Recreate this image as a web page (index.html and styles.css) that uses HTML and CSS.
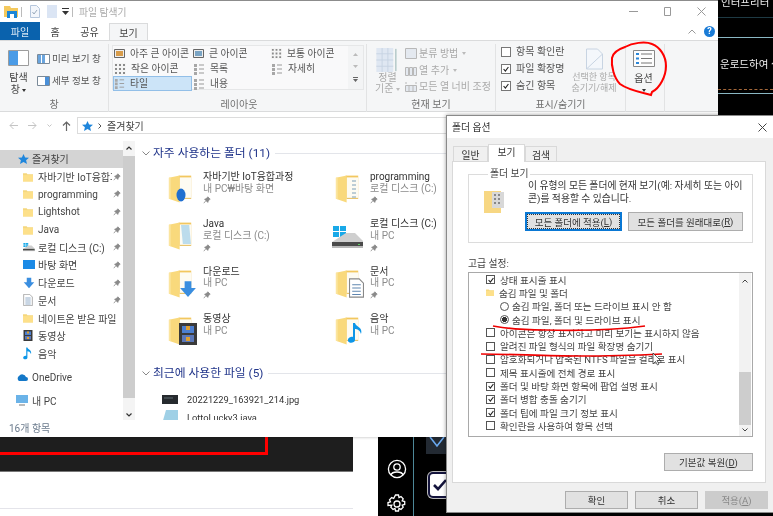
FILE: index.html
```html
<!DOCTYPE html>
<html lang="ko">
<head>
<meta charset="utf-8">
<title>폴더 옵션</title>
<link rel="stylesheet" href="styles.css">
</head>
<body>
<svg class="defs" width="0" height="0">
  <defs>
    <symbol id="folder" viewBox="0 0 16 14"><path d="M0 1h6l1 1.500h9V14H0z" fill="#f5d77e"/><path d="M0 4h16v10H0z" fill="#fde08a"/></symbol>
    <symbol id="bigfolder" viewBox="0 0 28 32"><path d="M12 1h14v25H12z" fill="#f2c75f"/><path d="M13 3h13v23H13z" fill="#fdfbf2"/><path d="M1 3.500 13 1v30L1 27z" fill="#f9d97c"/><path d="M1 3.500l2-.4V27.600L1 27z" fill="#fbe59f"/><path d="M13 26h13v1H13z" fill="#e3b84f"/></symbol>
    <symbol id="pin" viewBox="0 0 10 10"><path d="M6 1l3 3-1 .5-1.500 2L6 8 2 4l1.500-.5 2-1.500zM3.500 6 1 9" fill="#8a8a8a" stroke="#8a8a8a"/></symbol>
    <symbol id="check" viewBox="0 0 10 10"><path d="M2 5l2.200 2.500L8 2.500" fill="none" stroke="#222" stroke-width="1.400"/></symbol>
    <symbol id="down" viewBox="0 0 16 16"><path d="M5 1h6v6h4l-7 8-7-8h4z" fill="#3a8ee0"/></symbol>
    <symbol id="disk" viewBox="0 0 32 24"><path d="M1 1h6v5H1zM8 1h6v5H8zM1 7h6v5H1zM8 7h6v5H8z" fill="#19a9e8"/><path d="M14 8h9l8 8v3H0v-2z" fill="#cfcfcf"/><path d="M0 17h31v5H0z" fill="#4a4a4a"/><path d="M0 21h31v2H0z" fill="#b8b8b8"/><path d="M26 19h2v1h-2z" fill="#5fd05f"/></symbol>
    <symbol id="note" viewBox="0 0 16 22"><path d="M5 1h2c1 4 8 4 6 11-1-4-4-5-6-5v11c0 3-6 4-7 1s3-5 5-4z" fill="#0d96e8"/></symbol>
    <symbol id="film" viewBox="0 0 18 22"><path d="M0 0h18v22H0z" fill="#3a3a3a"/><path d="M3 3h12v7H3z" fill="#4c7fd0"/><path d="M3 12h12v7H3z" fill="#5c78b8"/><path d="M7 3h4v4H7zM7 14h4v4H7z" fill="#e0a030"/></symbol>
    <symbol id="doc" viewBox="0 0 14 18"><path d="M.5.500h9l4 4v13H.500z" fill="#fff" stroke="#888"/><path d="M3 6h8M3 9h8M3 12h8M3 15h8" stroke="#5f86b0"/></symbol>
    <symbol id="grid" viewBox="0 0 12 12"><path d="M0 0h12v12H0z" fill="#f5f5f5"/><path d="M1 1h2v2H1zM5 1h2v2H5zM9 1h2v2H9zM1 5h2v2H1zM5 5h2v2H5zM9 5h2v2H9zM1 9h2v2H1zM5 9h2v2H5zM9 9h2v2H9z" fill="#8b8b8b"/></symbol>
    <symbol id="list" viewBox="0 0 12 12"><path d="M1 1h3v3H1zM1 5h3v3H1zM1 9h3v3H1z" fill="#a7a7a7"/><path d="M6 2h5M6 6h5M6 10h5" stroke="#999"/></symbol>
  </defs>
</svg>
<div class="desktop">

  <div class="editor"><div class="red-frame"></div></div>
  <div class="page-rule"></div>

  <div class="app">
    <div class="app-line app-line-a"></div>
    <div class="app-line app-line-b"></div>
    <div class="app-line app-line-c"></div>
    <div class="app-dash"></div>
    <span class="app-text app-text-a">인터프리터</span>
    <span class="app-text app-text-b">운로드하여 실</span>
    <div class="side-rule"></div>
    <div class="tile"><svg width="16" height="12" viewBox="0 0 16 12"><path d="M1 1l7 9 7-9" fill="none" stroke="#6aa8ee" stroke-width="1.600"/></svg></div>
    <svg class="ico-user" width="20" height="20" viewBox="0 0 20 20"><circle cx="10" cy="10" r="8.600" fill="none" stroke="#fff" stroke-width="1.300"/><circle cx="10" cy="8" r="3.200" fill="none" stroke="#fff" stroke-width="1.300"/><path d="M4 16c1-4 11-4 12 0" fill="none" stroke="#fff" stroke-width="1.300"/></svg>
    <svg class="ico-gear" width="20" height="20" viewBox="0 0 20 20"><circle cx="10" cy="10" r="3" fill="none" stroke="#fff" stroke-width="1.300"/><path d="M8.500 1h3l.5 2.500 2-.9 2.200 2.200-1 2 2.500.7v3l-2.500.7 1 2-2.200 2.200-2-1-.5 2.600h-3l-.5-2.600-2 1-2.200-2.200 1-2L1 11.500v-3l2.500-.7-1-2 2.200-2.200 2 .9z" fill="none" stroke="#fff" stroke-width="1.300"/></svg>
    <div class="check-tile"><svg width="14" height="12" viewBox="0 0 14 12"><path d="M1 6l4 4 8-9" fill="none" stroke="#14143c" stroke-width="2.600"/></svg></div>
  </div>

  <section class="explorer">
    <header class="titlebar">
      <svg class="qa-folder" width="14" height="13" viewBox="0 0 14 13"><path d="M0 1h6l1 2h7v9H0z" fill="#f4c95d"/><path d="M3 6h10v7H3z" fill="#1b86d8"/><path d="M6 9h4v4H6z" fill="#fff"/></svg>
      <span class="qa-sep"></span>
      <svg class="qa-doc" width="10" height="13" viewBox="0 0 10 13"><path d="M.5.500h6l3 3v9H.500z" fill="#f3f6fb" stroke="#b5c6dc"/><path d="M2.500 7l1.500 2 3-4" fill="none" stroke="#9ab"/></svg>
      <svg class="qa-doc" width="10" height="13" viewBox="0 0 10 13"><path d="M0 0h10v13H0z" fill="#dbe5f4"/></svg>
      <svg class="qa-drop" width="7" height="7" viewBox="0 0 7 7"><path d="M0 0h7v1H0zM0 3h7L3.500 7z" fill="#333"/></svg>
      <span class="qa-sep"></span>
      <span class="title-text">파일 탐색기</span>
      <div class="winbtns">
        <svg width="9" height="9" viewBox="0 0 9 9"><path d="M0 4.500h9" stroke="#999"/></svg>
        <svg width="9" height="9" viewBox="0 0 9 9"><path d="M1.500.5h6v8h-6z" fill="none" stroke="#999"/></svg>
        <svg width="9" height="9" viewBox="0 0 9 9"><path d="M.5.500l8 8M8.500.5l-8 8" stroke="#999"/></svg>
      </div>
    </header>

    <nav class="tabs">
      <span class="tab tab-file">파일</span>
      <span class="tab tab-home">홈</span>
      <span class="tab tab-share">공유</span>
      <span class="tab tab-view">보기</span>
      <div class="tabs-end">
        <svg width="8" height="5" viewBox="0 0 8 5"><path d="M.5 4.500 4 1l3.500 3.500" fill="none" stroke="#999"/></svg>
        <span class="help">?</span>
      </div>
    </nav>

    <div class="ribbon">
      <div class="group group-pane">
        <div class="group-body pane-body">
          <div class="nav-pane">
            <svg width="21" height="16" viewBox="0 0 21 16"><path d="M.5.500h20v15H.500z" fill="#fff" stroke="#9c9c9c"/><path d="M1 1h9v14H1z" fill="#4a9be6"/></svg>
            <span class="nav-pane-label">탐색<br>창 <i class="caret"></i></span>
          </div>
          <div class="pane-list">
            <span class="pane-item"><svg width="13" height="10" viewBox="0 0 13 10"><path d="M.5.500h12v9H.500z" fill="#fff" stroke="#7a8a99"/><path d="M1 1h3v8H1zM5 1h3v8H5z" fill="#6aa5de"/></svg>미리 보기 창</span>
            <span class="pane-item"><svg width="13" height="10" viewBox="0 0 13 10"><path d="M.5.500h12v9H.500z" fill="#fff" stroke="#7a8a99"/><path d="M8 1h4v8H8z" fill="#4a90d9"/></svg>세부 정보 창</span>
          </div>
        </div>
        <div class="group-label">창</div>
      </div>

      <div class="group group-layout">
        <div class="group-body">
          <div class="gallery">
            <div class="gallery-grid">
              <span class="g-item"><svg width="11" height="9" viewBox="0 0 11 9"><path d="M.5.500h10v8H.500z" fill="#eee" stroke="#666"/><path d="M2 2h7v5H2z" fill="#d89c4a"/></svg>아주 큰 아이콘</span>
              <span class="g-item"><svg width="11" height="9" viewBox="0 0 11 9"><path d="M.5.500h10v8H.500z" fill="#eee" stroke="#666"/><path d="M2 2h7v5H2z" fill="#7aa4c4"/></svg>큰 아이콘</span>
              <span class="g-item"><svg width="11" height="11"><use href="#grid"/></svg>보통 아이콘</span>
              <span class="g-item"><svg width="12" height="12"><use href="#grid"/></svg>작은 아이콘</span>
              <span class="g-item"><svg width="12" height="12"><use href="#list"/></svg>목록</span>
              <span class="g-item"><svg width="12" height="12"><use href="#list"/></svg>자세히</span>
              <span class="g-item g-selected"><svg width="11" height="11"><use href="#list"/></svg>타일</span>
              <span class="g-item"><svg width="12" height="12"><use href="#list"/></svg>내용</span>
            </div>
            <div class="gallery-scroll">
              <svg width="5" height="3" viewBox="0 0 5 3"><path d="M0 3l2.500-3L5 3z" fill="#bbb"/></svg>
              <svg width="5" height="3" viewBox="0 0 5 3"><path d="M0 0l2.500 3L5 0z" fill="#bbb"/></svg>
              <svg width="5" height="5" viewBox="0 0 5 5"><path d="M0 0h5v1H0zM0 2h5L2.500 5z" fill="#666"/></svg>
            </div>
          </div>
        </div>
        <div class="group-label">레이아웃</div>
      </div>

      <div class="group group-view">
        <div class="group-body view-body">
          <div class="sort">
            <svg width="24" height="24" viewBox="0 0 24 27"><path d="M0 0h19v27H0z" fill="#dfe7f2"/><path d="M0 6.500h19M0 13.500h19M0 20.500h19M6.500 0v27M13 0v27" stroke="#c6d2e2"/><path d="M22 1v25" stroke="#8aa"/></svg>
            <span class="sort-label">정렬<br>기준 <i class="caret caret-light"></i></span>
          </div>
          <div class="view-list">
            <span class="view-item"><svg width="12" height="11" viewBox="0 0 12 11"><path d="M.5.500h11v10H.500z" fill="#e4e9f0" stroke="#b8b8b8"/></svg>분류 방법 <i class="caret caret-light"></i></span>
            <span class="view-item"><svg width="12" height="11" viewBox="0 0 12 11"><path d="M.5 2.500h3v8h-3zM4.500 2.500h3v8h-3zM8.500 2.500h3v8h-3z" fill="#e4e9f0" stroke="#b8b8b8"/></svg>열 추가 <i class="caret caret-light"></i></span>
            <span class="view-item"><svg width="12" height="11" viewBox="0 0 12 11"><path d="M.5 4.500h11v6H.500zM4 4.500v6M8 4.500v6M1 1v2M11 1v2" fill="#e4e9f0" stroke="#b8b8b8"/></svg>모든 열 너비 조정</span>
          </div>
        </div>
        <div class="group-label">현재 보기</div>
      </div>

      <div class="group group-show">
        <div class="group-body show-body">
          <div class="show-list">
            <span class="show-item"><span class="box"></span>항목 확인란</span>
            <span class="show-item"><span class="box"><svg width="8" height="8"><use href="#check"/></svg></span>파일 확장명</span>
            <span class="show-item"><span class="box"><svg width="8" height="8"><use href="#check"/></svg></span>숨긴 항목</span>
          </div>
          <div class="hide-sel">
            <svg width="17" height="22" viewBox="0 0 17 21"><path d="M.5.500h11l5 5v15H.500z" fill="#f4f7fb" stroke="#c8d4e2"/><path d="M1 20 16 6" stroke="#c8d4e2"/></svg>
            <span>선택한 항목<br>숨기기/해제</span>
          </div>
        </div>
        <div class="group-label">표시/숨기기</div>
      </div>

      <div class="group group-opt">
        <div class="group-body opt-body">
          <svg width="22" height="17" viewBox="0 0 22 17"><path d="M.5.500h21v16H.500z" fill="#fdfdfd" stroke="#888"/><path d="M3 4h3M3 8.500h3M3 13h3" stroke="#2a86d8" stroke-width="2"/><path d="M8 4h11M8 8.500h11M8 13h11" stroke="#777"/></svg>
          <span>옵션</span>
          <i class="caret"></i>
        </div>
      </div>
    </div>

    <div class="addressbar">
      <div class="nav-arrows">
        <svg width="9" height="9" viewBox="0 0 9 9"><path d="M9 4.500H1M4.500 1 1 4.500 4.500 8" fill="none" stroke="#c4c4c4"/></svg>
        <svg width="9" height="9" viewBox="0 0 9 9"><path d="M0 4.500h8M4.500 1 8 4.500 4.500 8" fill="none" stroke="#c4c4c4"/></svg>
        <svg width="5" height="3" viewBox="0 0 5 3"><path d="M.5.500l2 2 2-2" fill="none" stroke="#c4c4c4"/></svg>
        <svg width="9" height="10" viewBox="0 0 9 10"><path d="M4.500 10V1M1 4.500 4.500 1 8 4.500" fill="none" stroke="#666" stroke-width="1.200"/></svg>
      </div>
      <div class="address">
        <svg width="11" height="10" viewBox="0 0 11 10"><path d="M5.500 0l1.600 3.400 3.900.4-2.900 2.500.9 3.700-3.500-2-3.500 2 .9-3.700L0 3.800l3.900-.4z" fill="#1f86dc"/></svg>
        <svg width="4" height="6" viewBox="0 0 4 6"><path d="M.5.500 3 3 .5 5.500" fill="none" stroke="#555"/></svg>
        <span>즐겨찾기</span>
      </div>
    </div>

    <div class="main">
      <aside class="sidebar">
        <div class="tree">
          <div class="tree-row tree-root"><svg class="tree-ico" width="11" height="10" viewBox="0 0 11 10"><path d="M5.500 0l1.600 3.400 3.900.4-2.900 2.500.9 3.700-3.500-2-3.500 2 .9-3.700L0 3.800l3.900-.4z" fill="#1f86dc"/></svg><span>즐겨찾기</span></div>
          <div class="tree-row"><svg class="tree-ico" width="10" height="12"><use href="#folder"/></svg><span class="tree-name">자바기반 IoT융합과정</span><svg class="tree-pin" width="8" height="8"><use href="#pin"/></svg></div>
          <div class="tree-row"><svg class="tree-ico" width="10" height="12"><use href="#folder"/></svg><span class="tree-name">programming</span><svg class="tree-pin" width="8" height="8"><use href="#pin"/></svg></div>
          <div class="tree-row"><svg class="tree-ico" width="10" height="12"><use href="#folder"/></svg><span class="tree-name">Lightshot</span><svg class="tree-pin" width="8" height="8"><use href="#pin"/></svg></div>
          <div class="tree-row"><svg class="tree-ico" width="10" height="12"><use href="#folder"/></svg><span class="tree-name">Java</span><svg class="tree-pin" width="8" height="8"><use href="#pin"/></svg></div>
          <div class="tree-row"><svg class="tree-ico" width="12" height="10"><use href="#disk"/></svg><span class="tree-name">로컬 디스크 (C:)</span><svg class="tree-pin" width="8" height="8"><use href="#pin"/></svg></div>
          <div class="tree-row"><svg class="tree-ico" width="12" height="10" viewBox="0 0 12 10"><path d="M0 0h12v9H0z" fill="#1b8ae6"/></svg><span class="tree-name">바탕 화면</span><svg class="tree-pin" width="8" height="8"><use href="#pin"/></svg></div>
          <div class="tree-row"><svg class="tree-ico" width="12" height="12"><use href="#down"/></svg><span class="tree-name">다운로드</span><svg class="tree-pin" width="8" height="8"><use href="#pin"/></svg></div>
          <div class="tree-row"><svg class="tree-ico" width="10" height="12"><use href="#doc"/></svg><span class="tree-name">문서</span><svg class="tree-pin" width="8" height="8"><use href="#pin"/></svg></div>
          <div class="tree-row"><svg class="tree-ico" width="10" height="12"><use href="#folder"/></svg><span class="tree-name tree-wide">네이트온 받은 파일</span></div>
          <div class="tree-row"><svg class="tree-ico" width="10" height="11"><use href="#film"/></svg><span class="tree-name">동영상</span></div>
          <div class="tree-row"><svg class="tree-ico" width="10" height="13"><use href="#note"/></svg><span class="tree-name">음악</span></div>
          <div class="tree-row tree-top tree-drive"><svg class="tree-ico" width="12" height="8" viewBox="0 0 12 8"><path d="M3 8a3 3 0 0 1 0-5 4 4 0 0 1 7 1 2 2 0 0 1 0 4z" fill="#1478c8"/></svg><span>OneDrive</span></div>
          <div class="tree-row tree-top tree-pc"><svg class="tree-ico" width="12" height="11" viewBox="0 0 12 11"><path d="M0 0h12v8H0z" fill="#6bb3e8"/><path d="M3 9h6v2H3z" fill="#bbb"/></svg><span>내 PC</span></div>
        </div>
        <div class="side-scroll">
          <svg width="6" height="4" viewBox="0 0 6 4"><path d="M.5 3.500 3 1l2.500 2.500" fill="none" stroke="#333" stroke-width="1.200"/></svg>
          <div class="side-thumb"></div>
          <svg width="6" height="4" viewBox="0 0 6 4"><path d="M.5.500 3 3 5.500.5" fill="none" stroke="#333" stroke-width="1.200"/></svg>
        </div>
      </aside>

      <div class="content">
        <h2 class="sec-head"><svg width="8" height="5" viewBox="0 0 8 5"><path d="M.5.500 4 4 7.500.5" fill="none" stroke="#888"/></svg><span>자주 사용하는 폴더 (11)</span><i class="sec-rule"></i></h2>
        <div class="folders">
          <div class="folder">
            <span class="folder-ico"><svg width="25" height="30"><use href="#bigfolder"/></svg><svg class="badge badge-cd" width="10" height="14" viewBox="0 0 10 14"><ellipse cx="5" cy="7" rx="4.500" ry="6.500" fill="#1f6fd0"/></svg></span>
            <div class="folder-text"><b>자바기반 IoT융합과정</b><span>내 PC₩바탕 화면</span><svg width="8" height="8"><use href="#pin"/></svg></div>
          </div>
          <div class="folder">
            <span class="folder-ico"><svg width="25" height="30"><use href="#bigfolder"/></svg><svg class="badge badge-lines" width="6" height="18" viewBox="0 0 6 18"><path d="M1 1h4M1 5h4M1 9h4M1 13h4M1 17h4" stroke="#7d9fb8"/></svg></span>
            <div class="folder-text"><b>programming</b><span>로컬 디스크 (C:)</span><svg width="8" height="8"><use href="#pin"/></svg></div>
          </div>
          <div class="folder">
            <span class="folder-ico"><svg width="25" height="30"><use href="#bigfolder"/></svg><svg class="badge badge-page" width="10" height="19" viewBox="0 0 11 21"><path d="M0 0h9l2 21H2z" fill="#bcdcec"/></svg></span>
            <div class="folder-text"><b>Java</b><span>로컬 디스크 (C:)</span><svg width="8" height="8"><use href="#pin"/></svg></div>
          </div>
          <div class="folder">
            <span class="folder-ico folder-disk"><svg width="32" height="24"><use href="#disk"/></svg></span>
            <div class="folder-text"><b>로컬 디스크 (C:)</b><span>내 PC</span><svg width="8" height="8"><use href="#pin"/></svg></div>
          </div>
          <div class="folder">
            <span class="folder-ico"><svg width="25" height="30"><use href="#bigfolder"/></svg><svg class="badge badge-corner" width="18" height="18"><use href="#down"/></svg></span>
            <div class="folder-text"><b>다운로드</b><span>내 PC</span><svg width="8" height="8"><use href="#pin"/></svg></div>
          </div>
          <div class="folder">
            <span class="folder-ico"><svg width="25" height="30"><use href="#bigfolder"/></svg><svg class="badge badge-corner" width="15" height="20"><use href="#doc"/></svg></span>
            <div class="folder-text"><b>문서</b><span>내 PC</span><svg width="8" height="8"><use href="#pin"/></svg></div>
          </div>
          <div class="folder">
            <span class="folder-ico"><svg width="25" height="30"><use href="#bigfolder"/></svg><svg class="badge badge-corner" width="18" height="22"><use href="#film"/></svg></span>
            <div class="folder-text"><b>동영상</b><span>내 PC</span></div>
          </div>
          <div class="folder">
            <span class="folder-ico"><svg width="25" height="30"><use href="#bigfolder"/></svg><svg class="badge badge-corner" width="16" height="24"><use href="#note"/></svg></span>
            <div class="folder-text"><b>음악</b><span>내 PC</span></div>
          </div>
        </div>
        <h2 class="sec-head sec-recent"><svg width="8" height="5" viewBox="0 0 8 5"><path d="M.5.500 4 4 7.500.5" fill="none" stroke="#888"/></svg><span>최근에 사용한 파일 (5)</span><i class="sec-rule"></i></h2>
        <div class="recent">
          <div class="recent-row"><svg width="16" height="9" viewBox="0 0 16 9"><path d="M0 0h16v9H0z" fill="#262a2e"/><path d="M2 3h9" stroke="#5d6a70"/></svg><span>20221229_163921_214.jpg</span></div>
          <div class="recent-row"><svg width="16" height="14" viewBox="0 0 16 14"><path d="M4 0h12v14H0z" fill="#9fd0e6"/></svg><span>LottoLucky3.java</span></div>
        </div>
      </div>
    </div>

    <footer class="statusbar"><span>16개 항목</span></footer>
  </section>

  <section class="dialog">
    <header class="dlg-title">
      <span>폴더 옵션</span>
      <svg width="9" height="9" viewBox="0 0 9 9"><path d="M.5.500l8 8M8.500.5l-8 8" stroke="#444"/></svg>
    </header>
    <div class="dlg-tabs">
      <span class="dlg-tab">일반</span>
      <span class="dlg-tab dlg-tab-on">보기</span>
      <span class="dlg-tab dlg-tab-last">검색</span>
    </div>
    <div class="dlg-panel">
      <fieldset class="fview">
        <legend>폴더 보기</legend>
        <svg class="fview-ico" width="20" height="22" viewBox="0 0 20 22"><path d="M0 0h17v22H0z" fill="#f7d783"/><path d="M8 1h12v16H8z" fill="#d8d8d8"/><path d="M10 3h2v2h-2zM14 3h2v2h-2zM10 7h2v2h-2zM14 7h2v2h-2zM10 11h2v2h-2zM14 11h2v2h-2z" fill="#888"/></svg>
        <div class="fview-main">
          <p>이 유형의 모든 폴더에 현재 보기(예: 자세히 또는 아이<br>콘)를 적용할 수 있습니다.</p>
          <div class="fview-btns">
            <button class="btn btn-focus" type="button"><span>모든 폴더에 적용(<u>L</u>)</span></button>
            <button class="btn btn-reset" type="button">모든 폴더를 원래대로(<u>R</u>)</button>
          </div>
        </div>
      </fieldset>
      <div class="adv-label">고급 설정:</div>
      <div class="adv-list">
        <ul class="adv-rows">
          <li><span class="cb"><svg width="8" height="8"><use href="#check"/></svg></span>상태 표시줄 표시</li>
          <li><svg class="adv-folder" width="8" height="9"><use href="#folder"/></svg>숨김 파일 및 폴더</li>
          <li class="sub"><span class="radio"></span>숨김 파일, 폴더 또는 드라이브 표시 안 함</li>
          <li class="sub"><span class="radio radio-on"></span>숨김 파일, 폴더 및 드라이브 표시</li>
          <li><span class="cb"></span>아이콘은 항상 표시하고 미리 보기는 표시하지 않음</li>
          <li><span class="cb"></span>알려진 파일 형식의 파일 확장명 숨기기</li>
          <li><span class="cb"></span>암호화되거나 압축된 NTFS 파일을 컬러로 표시</li>
          <li><span class="cb"></span>제목 표시줄에 전체 경로 표시</li>
          <li><span class="cb"><svg width="8" height="8"><use href="#check"/></svg></span>폴더 및 바탕 화면 항목에 팝업 설명 표시</li>
          <li><span class="cb"><svg width="8" height="8"><use href="#check"/></svg></span>폴더 병합 충돌 숨기기</li>
          <li><span class="cb"><svg width="8" height="8"><use href="#check"/></svg></span>폴더 팁에 파일 크기 정보 표시</li>
          <li><span class="cb"></span>확인란을 사용하여 항목 선택</li>
        </ul>
        <div class="adv-scroll">
          <svg width="6" height="4" viewBox="0 0 6 4"><path d="M.5 3.500 3 1l2.500 2.500" fill="none" stroke="#444"/></svg>
          <div class="adv-thumb"></div>
          <svg width="6" height="4" viewBox="0 0 6 4"><path d="M.5.500 3 3 5.500.5" fill="none" stroke="#444"/></svg>
        </div>
      </div>
      <div class="restore-row"><button class="btn btn-restore" type="button">기본값 복원(<u>D</u>)</button></div>
    </div>
    <footer class="dlg-actions">
      <button class="btn btn-act" type="button">확인</button>
      <button class="btn btn-act" type="button">취소</button>
      <button class="btn btn-act btn-off" type="button">적용(<u>A</u>)</button>
    </footer>
  </section>

  <svg class="scribble" width="773" height="516" viewBox="0 0 773 516">
    <path d="M625 47C632 43 645 41 652 44 660 47 666 56 666 66 666 76 660 88 652 92L651 95C640 92 628 90 620 84 614 78 611 66 612 58 613 52 619 49 625 47Z" fill="none" stroke="#f00" stroke-width="2"/>
    <path d="M493 326C510 329 530 330 545 330 580 331 615 330 645 326" fill="none" stroke="#e00" stroke-width="1.700"/>
    <path d="M481 354C510 354 545 356 578 356 610 356 640 355 662 354" fill="none" stroke="#e00" stroke-width="1.700"/>
    <path d="M653 353v11l2.500-2.500 2 3.500 1.500-1-2-3.500h3.500z" fill="#fff" stroke="#222" stroke-width=".7"/>
  </svg>
</div>
</body>
</html>
```
FILE: styles.css
```css
* { box-sizing: border-box; }
html, body { margin: 0; padding: 0; background: #fff; }
body { font-family: Roboto, "Noto Sans CJK KR", "Noto Sans", sans-serif; font-size: 10px; color: #333; overflow: hidden; }
.defs { position: absolute; }
svg { display: block; flex: none; }
i { font-style: normal; }

.desktop { position: relative; width: 773px; height: 516px; overflow: hidden; background: #fff; filter: blur(.35px); }

/* background windows */
.editor { position: absolute; left: 0; top: 437px; width: 353px; height: 35px; background: #1e1e1e; border-bottom: 1px solid #777; overflow: hidden; }
.red-frame { position: absolute; left: -4px; top: -4px; width: 272px; height: 22px; border: 3px solid #f00; }
.page-rule { position: absolute; left: 0; top: 508px; width: 353px; height: 1px; background: #e4e4ea; }
.app { position: absolute; left: 378px; top: 0; width: 395px; height: 516px; background: #000; }
.app-line { position: absolute; left: 340px; right: 0; height: 1px; background: #8ab8c4; }
.app-line-a { top: 17px; background: #1e3a44; }
.app-line-b { top: 37px; }
.app-line-c { top: 93px; }
.app-dash { position: absolute; left: 340px; right: 0; top: 89px; border-top: 1px dashed #a5683a; }
.app-text { position: absolute; left: 343px; color: #eee; font-size: 10.500px; line-height: 14px; white-space: nowrap; }
.app-text-a { top: -4px; }
.app-text-b { left: 342px; top: 58px; }
.side-rule { position: absolute; left: 35px; top: 430px; bottom: 0; width: 1px; background: #4d8798; }
.tile { position: absolute; left: 48px; top: 430px; width: 30px; height: 24px; background: #232a33; padding: 6px 0 0 3px; }
.ico-user { position: absolute; left: 9px; top: 459px; }
.ico-gear { position: absolute; left: 9px; top: 494px; }
.check-tile { position: absolute; left: 50px; top: 472px; width: 32px; height: 26px; background: #fff; border: 2px solid #14143c; border-radius: 5px; padding: 5px 0 0 3px; box-shadow: 0 0 0 1px #bbb; }

/* explorer */
.explorer { position: absolute; left: 0; top: 0; width: 718px; height: 437px; background: #fff; border-top: 1px solid #8c8c8c; display: flex; flex-direction: column; box-shadow: 0 0 3px rgba(0,0,0,.3); }
.titlebar { height: 21px; flex: none; display: flex; align-items: center; padding: 0 0 0 4px; }
.qa-sep { width: 1px; height: 10px; background: #bbb; margin: 0 4px 0 3px; }
.qa-doc { margin: 0 3px 0 4px; }
.qa-drop { margin: 0 0 0 2px; }
.title-text { color: #aaa; font-size: 9.800px; margin-left: 2px; }
.winbtns { margin-left: auto; display: flex; gap: 25px; padding-right: 12px; }

.tabs { height: 18px; flex: none; display: flex; align-items: stretch; background: #fff; position: relative; }
.tab { display: flex; align-items: center; justify-content: center; font-size: 10px; color: #444; }
.tab-file { width: 40px; background: #0a62ad; color: #dbe9f5; }
.tab-home { width: 30px; }
.tab-share { width: 39px; }
.tab-view { width: 39px; background: #f5f6f7; border: 1px solid #dadbdc; border-bottom: 0; margin-top: 1px; }
.tabs-end { margin-left: auto; display: flex; align-items: center; gap: 8px; padding: 0 3px 0 0; }
.help { width: 11px; height: 11px; border-radius: 50%; background: #1a7bd6; color: #fff; font-size: 9px; line-height: 11px; text-align: center; font-weight: 700; }

.ribbon { height: 72px; flex: none; display: flex; background: #f5f6f7; border-top: 1px solid #dadbdc; border-bottom: 1px solid #dadbdc; padding-top: 3px; }
.group { display: flex; flex-direction: column; border-right: 1px solid #e2e3e4; height: 68px; }
.group-body { flex: 1; min-height: 0; display: flex; }
.group-label { height: 15px; line-height: 15px; text-align: center; color: #6f6f6f; font-size: 10px; flex: none; }
.group-pane { width: 109px; }
.group-layout { width: 258px; padding-left: 3px; }
.group-view { width: 129px; }
.group-show { width: 130px; }
.group-opt { width: 39px; padding-right: 3px; }
.pane-body { padding: 6px 0 0 8px; gap: 8px; }
.nav-pane { display: flex; flex-direction: column; align-items: center; gap: 6px; width: 21px; }
.nav-pane-label { text-align: center; line-height: 12px; color: #444; white-space: nowrap; }
.caret { display: inline-block; width: 0; height: 0; border: 2.500px solid transparent; border-top: 3px solid #333; border-bottom: 0; vertical-align: middle; }
.caret-light { border-top-color: #bbb; }
.pane-list { display: flex; flex-direction: column; gap: 10px; padding-top: 3px; }
.pane-item { display: flex; align-items: center; gap: 2px; color: #555; line-height: 12px; white-space: nowrap; font-size: 9.600px; }

.gallery { width: 252px; height: 45px; display: flex; background: #f9f9fa; border: 1px solid #e6e7e8; margin-top: 1px; }
.gallery-grid { flex: 1; display: grid; grid-template-columns: 79px 78px 78px; grid-auto-rows: 15px; }
.gallery-scroll { width: 15px; background: #f3f4f5; display: flex; flex-direction: column; align-items: center; justify-content: space-around; padding: 3px 0; }
.g-item { display: flex; align-items: center; gap: 5px; padding-left: 1px; color: #555; white-space: nowrap; line-height: 13px; font-size: 9.800px; }
.g-selected { background: #cce4f8; border: 1px solid #92bfe8; padding-left: 0; }

.view-body { padding: 1px 0 0 0; gap: 4px; }
.sort { display: flex; flex-direction: column; align-items: flex-start; width: 26px; margin-left: 8px; margin-top: 3px; }
.sort-label { color: #aaa; line-height: 11px; text-align: center; white-space: nowrap; }
.view-list { display: flex; flex-direction: column; gap: 3.500px; padding-top: 2px; }
.view-item { display: flex; align-items: center; gap: 2px; color: #aaa; line-height: 13px; white-space: nowrap; }
.view-item .caret { margin-left: 2px; }

.show-body { padding: 1px 0 0 5px; gap: 7px; }
.show-list { display: flex; flex-direction: column; gap: 4px; }
.show-item { display: flex; align-items: center; gap: 5px; color: #555; line-height: 13px; white-space: nowrap; }
.box { width: 10px; height: 10px; background: #fff; border: 1px solid #777; display: flex; align-items: center; justify-content: center; }
.hide-sel { display: flex; flex-direction: column; align-items: center; color: #aaa; line-height: 11px; white-space: nowrap; font-size: 9px; gap: 2px; padding-top: 3px; text-align: center; }

.opt-body { flex-direction: column; align-items: center; padding-top: 6px; color: #444; line-height: 13px; gap: 4px; }
.opt-body span { margin-top: 1px; }

.addressbar { height: 25px; flex: none; display: flex; align-items: center; padding: 5px 0 3px 9px; }
.nav-arrows { display: flex; align-items: center; gap: 10px; width: 68px; }
.address { flex: 1; height: 17px; border: 1px solid #dcdcdc; border-right: 0; display: flex; align-items: center; gap: 5px; padding-left: 4px; color: #444; }

.main { flex: 1; min-height: 0; display: flex; overflow: hidden; }
.sidebar { width: 135px; flex: none; display: flex; padding-top: 4px; height: 100%; }
.tree { width: 123px; flex: none; padding-top: 9px; }
.tree-row { height: 17.700px; display: flex; align-items: center; padding-left: 24px; white-space: nowrap; color: #444; position: relative; }
.tree-row > .tree-ico { position: absolute; left: 23px; }
.tree-root { background: #d4d4d4; padding-left: 32px; }
.tree-root > .tree-ico { left: 18px; }
.tree-name { margin-left: 14px; width: 74px; overflow: hidden; flex: none; }
.tree-wide { width: 78px; }
.tree-pin { margin-left: 1px; }
.tree-top { padding-left: 32px; }
.tree-top > .tree-ico { left: 16px; }
.tree-drive { margin-top: 6px; }
.tree-pc { margin-top: 6px; }
.side-scroll { width: 12px; height: 281px; background: #f4f4f4; display: flex; flex-direction: column; align-items: center; justify-content: space-between; padding: 5px 0; }
.side-thumb { width: 100%; height: 242px; background: #cdcdcd; margin: 0 0 10px; }

.content { flex: 1; min-width: 0; padding: 8px 0 0 7px; }
.sec-head { margin: 0; display: flex; align-items: center; gap: 3px; font-weight: 400; font-size: 11.800px; line-height: 16px; color: #21358a; white-space: nowrap; }
.sec-rule { flex: 1; height: 1px; background: #e3e5ea; margin-left: 2px; }
.folders { display: grid; grid-template-columns: 167px 167px; grid-auto-rows: 47.300px; padding: 10px 0 0 26px; }
.folder { display: flex; gap: 10px; }
.folder-ico { width: 25px; height: 32px; position: relative; flex: none; margin-top: 3px; }
.folder-disk { margin-top: 7px; margin-left: -3px; margin-right: 3px; }
.badge { position: absolute; }
.badge-cd { left: 8px; top: 14px; }
.badge-page { left: 13px; top: 4px; }
.badge-lines { left: 16px; top: 6px; }
.badge-corner { right: -4px; bottom: 3px; }
.folder-text { display: flex; flex-direction: column; color: #8b8b8b; line-height: 11.700px; white-space: nowrap; }
.folder-text b { font-weight: 400; color: #333; }
.folder-text svg { margin-top: 2px; }
.sec-recent { margin-top: 5px; }
.recent { padding: 9px 0 0 20px; }
.recent-row { display: flex; align-items: center; gap: 9px; height: 18px; color: #333; white-space: nowrap; font-size: 9.300px; }

.statusbar { height: 17px; flex: none; background: #fff; padding-left: 9px; line-height: 17px; color: #6a7a8c; position: relative; }

/* dialog */
.dialog { position: absolute; left: 446px; top: 115px; width: 330px; height: 398px; background: #f0f0f0; border: 1px solid #8a8a8a; display: flex; flex-direction: column; box-shadow: 0 0 4px rgba(0,0,0,.4); }
.dlg-title { height: 22px; flex: none; background: #fff; display: flex; align-items: center; justify-content: space-between; padding: 0 8px 0 5px; font-size: 9.800px; color: #333; }
.dlg-tabs { height: 23px; flex: none; display: flex; align-items: flex-end; padding-left: 6px; }
.dlg-tab { height: 16px; border: 1px solid #d9d9d9; border-bottom: 0; background: #f0f0f0; display: flex; align-items: center; justify-content: center; width: 35px; font-size: 9.800px; margin-bottom: -1px; }
.dlg-tab-on { background: #fff; height: 18px; width: 37px; position: relative; z-index: 1; padding-bottom: 3px; }
.dlg-tab-last { width: 32px; }
.dlg-panel { width: 314px; height: 322px; margin-left: 5px; background: #fff; border: 1px solid #d9d9d9; padding: 6px 14px 0 15px; flex: none; display: flex; flex-direction: column; }
.fview { margin: 0; padding: 0 0 0 15px; width: 285px; height: 75px; border: 1px solid #dcdcdc; display: flex; flex: none; }
.fview legend { padding: 0 2px; margin-left: 4px; line-height: 12px; color: #444; font-size: 9.800px; }
.fview-ico { margin: 11px 24px 0 0; }
.fview-main { display: block; }
.fview-main p { margin: 0; font-size: 9.800px; line-height: 12.500px; color: #333; white-space: nowrap; }
.fview-btns { display: flex; gap: 6px; margin-top: 7px; margin-left: -3px; }
.btn { font: inherit; font-size: 9.500px; color: #333; background: #e1e1e1; border: 1px solid #adadad; padding: 0; margin: 0; display: flex; align-items: center; justify-content: center; }
.btn-focus { width: 97px; height: 19px; border: 2px solid #0a78d4; }
.btn-focus span { display: flex; align-items: center; justify-content: center; width: 100%; height: 100%; outline: 1px dotted #333; outline-offset: -1px; white-space: pre; }
.btn-reset { width: 115px; height: 19px; }
.adv-label { margin-top: 15px; line-height: 12px; font-size: 9.800px; color: #444; flex: none; }
.adv-list { margin-top: 2px; width: 285px; height: 165px; border: 1px solid #a9a9a9; display: flex; flex: none; overflow: hidden; }
.adv-rows { list-style: none; margin: 0; padding: 0 0 0 17px; flex: 1; }
.adv-rows li { display: flex; align-items: center; height: 13.300px; gap: 5px; white-space: nowrap; color: #444; font-size: 9.600px; }
.adv-rows li.sub { padding-left: 14px; gap: 3px; }
.cb { width: 9px; height: 9px; border: 1px solid #555; background: #fff; display: flex; align-items: center; justify-content: center; flex: none; }
.adv-folder { width: 8px; height: 9px; }
.radio { width: 9px; height: 9px; border-radius: 50%; border: 1px solid #555; background: #fff; flex: none; }
.radio-on { background: radial-gradient(circle, #333 0 2.300px, #fff 2.800px); }
.adv-scroll { width: 12px; margin: 0 1px 0 0; display: flex; flex-direction: column; align-items: center; justify-content: space-between; padding: 6px 0 4px; background: #f2f2f2; position: relative; }
.adv-thumb { width: 100%; height: 53px; background: #cdcdcd; margin-top: auto; margin-bottom: 3px; }
.adv-scroll svg:first-child { position: absolute; top: 6px; }
.restore-row { display: flex; justify-content: flex-end; margin-top: 16px; flex: none; width: 285px; }
.btn-restore { width: 89px; height: 18px; }
.dlg-actions { flex: 1; display: flex; justify-content: flex-end; align-items: flex-start; gap: 7px; padding: 8px 7px 0 0; }
.btn-act { width: 63px; height: 18px; }
.btn-off { background: #ccc; border-color: #ccc; color: #888; }

.scribble { position: absolute; left: 0; top: 0; pointer-events: none; }
```
